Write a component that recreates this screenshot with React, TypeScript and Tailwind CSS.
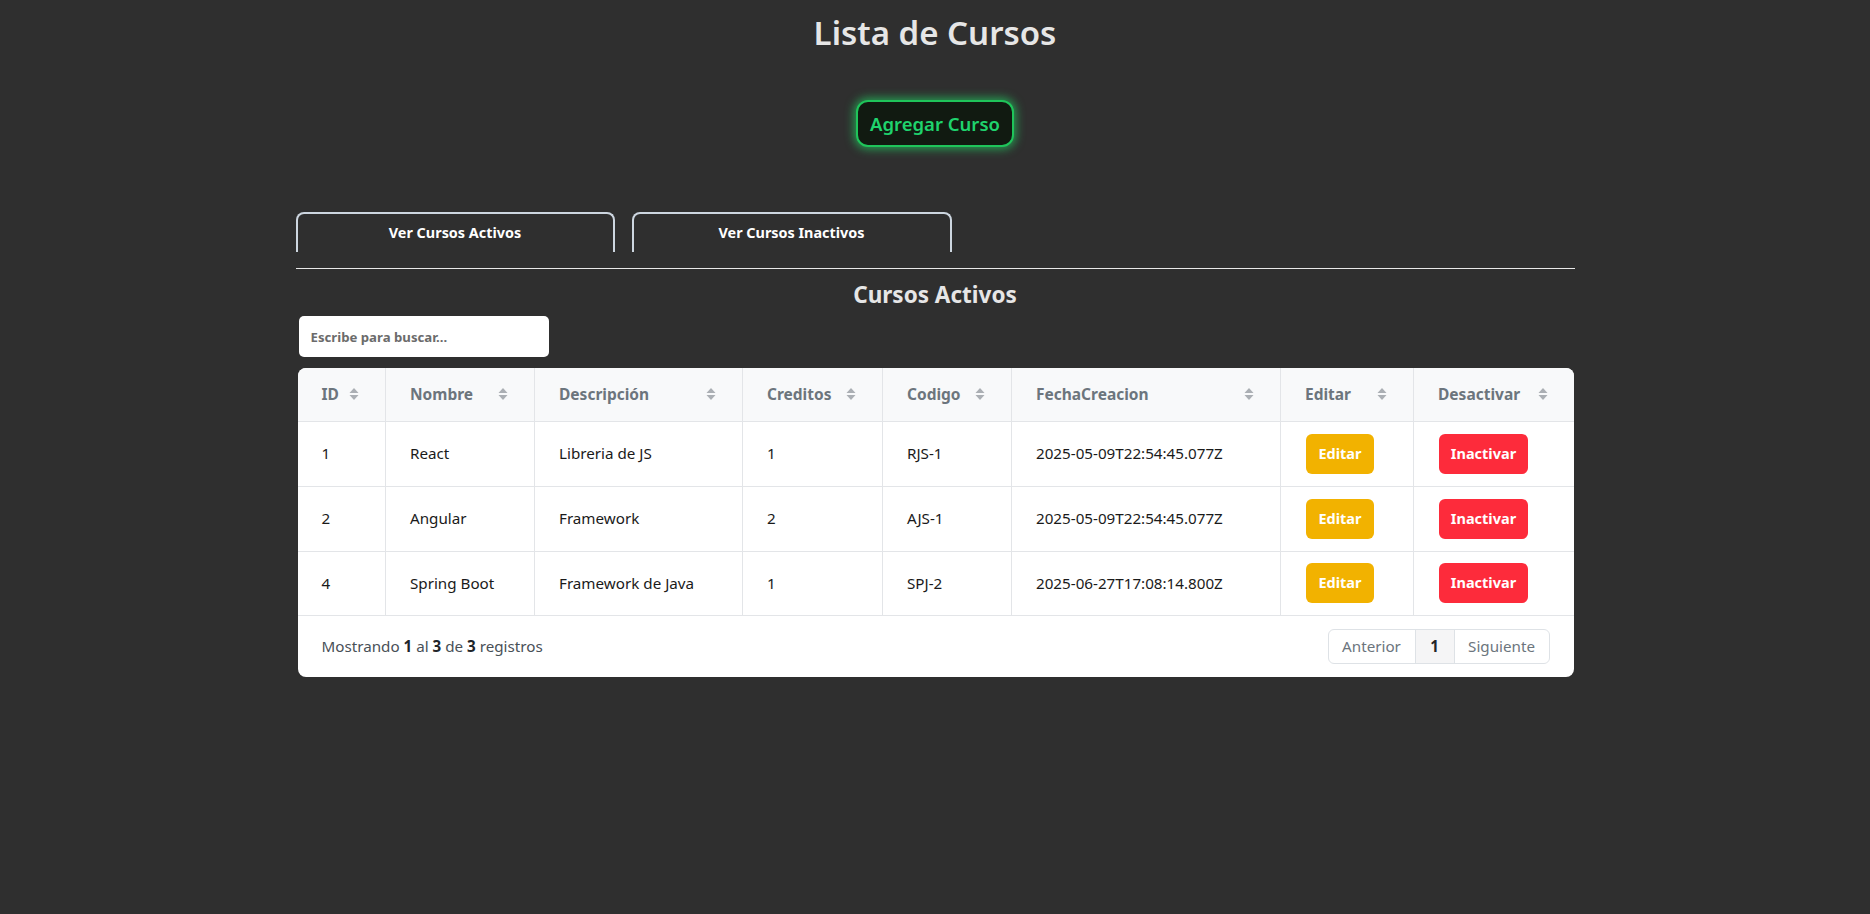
import React from "react";

const rows = [
  { id: "1", nombre: "React", desc: "Libreria de JS", cred: "1", cod: "RJS-1", fecha: "2025-05-09T22:54:45.077Z" },
  { id: "2", nombre: "Angular", desc: "Framework", cred: "2", cod: "AJS-1", fecha: "2025-05-09T22:54:45.077Z" },
  { id: "4", nombre: "Spring Boot", desc: "Framework de Java", cred: "1", cod: "SPJ-2", fecha: "2025-06-27T17:08:14.800Z" },
];

const headers = ["ID", "Nombre", "Descripción", "Creditos", "Codigo", "FechaCreacion", "Editar", "Desactivar"];
const widths = [88, 149, 208, 140, 129, 269, 133, 160];

function SortIcon() {
  return (
    <svg width="10" height="14" viewBox="0 0 10 14" className="shrink-0">
      <path d="M0.5 6 L5 1 L9.5 6 Z" fill="#abafb4" />
      <path d="M0.5 8 L5 13 L9.5 8 Z" fill="#abafb4" />
    </svg>
  );
}

export default function App() {
  return (
    <div className="min-h-[914px] bg-[#2f2f2f] font-['Noto_Sans',sans-serif]">
      <h1 className="pt-[12px] text-center text-[33px] leading-[42px] font-semibold text-[#e6e6e6]">
        Lista de Cursos
      </h1>
      <div className="mt-[46px] flex justify-center">
        <button className="h-[47px] w-[158px] rounded-[12px] border-2 border-[#1fc45a] bg-[#111a11] text-[18.5px] font-semibold text-[#1fd36d] shadow-[0_0_10px_2px_rgba(34,197,94,0.75)]">
          Agregar Curso
        </button>
      </div>

      <div className="mx-auto mt-[65px] w-[1279px]">
        <div className="flex gap-[17px]">
          <div className="flex h-[40px] w-[319px] items-center justify-center rounded-t-[8px] border-2 border-b-0 border-[#cdd6e0] text-[14.4px] font-bold text-white">
            Ver Cursos Activos
          </div>
          <div className="flex h-[40px] w-[320px] items-center justify-center rounded-t-[8px] border-2 border-b-0 border-[#cdd6e0] text-[14.4px] font-bold text-white">
            Ver Cursos Inactivos
          </div>
        </div>
        <div className="mt-[16px] h-px bg-[#e8e8e8]" />
        <h2 className="mt-[11px] text-center text-[22.5px] leading-[30px] font-bold text-[#e6e6e6]">Cursos Activos</h2>
        <div className="mt-[6px] ml-[3px]">
          <input
            className="h-[41px] w-[250px] rounded-[5px] bg-white pl-[12px] text-[13.2px] font-bold text-[#333] outline-none placeholder:text-[#6b6b6b]"
            placeholder="Escribe para buscar..."
          />
        </div>

        <div className="mt-[11px] ml-[2px] w-[1276px] overflow-hidden rounded-[8px] bg-white">
          <table className="w-full table-fixed border-collapse">
            <colgroup>
              {widths.map((w, i) => (
                <col key={i} style={{ width: w }} />
              ))}
            </colgroup>
            <thead>
              <tr className="h-[53px] bg-[#f8f9fa]">
                {headers.map((h, i) => (
                  <th
                    key={h}
                    className={`border-b border-[#e3e5e8] pl-[24px] pr-[26px] text-left text-[15.5px] font-bold text-[#6c757d] ${i < headers.length - 1 ? "border-r" : ""}`}
                  >
                    <div className="flex items-center justify-between">
                      <span>{h}</span>
                      <SortIcon />
                    </div>
                  </th>
                ))}
              </tr>
            </thead>
            <tbody>
              {rows.map((r, ri) => {
                const cells = [r.id, r.nombre, r.desc, r.cred, r.cod, r.fecha];
                return (
                  <tr key={ri} className={ri === 2 ? "h-[64px]" : "h-[65px]"}>
                    {cells.map((c, ci) => (
                      <td key={ci} className="border-r border-b border-[#e3e5e8] pl-[24px] text-[15.2px] text-[#1a1a1a]">
                        {c}
                      </td>
                    ))}
                    <td className="border-r border-b border-[#e3e5e8] pl-[25px]">
                      <button className="h-[40px] w-[68px] rounded-[6px] bg-[#f2b200] text-[14.5px] font-bold text-white">
                        Editar
                      </button>
                    </td>
                    <td className="border-b border-[#e3e5e8] pl-[25px]">
                      <button className="h-[40px] w-[89px] rounded-[6px] bg-[#fd2b3b] text-[14.5px] font-bold text-white">
                        Inactivar
                      </button>
                    </td>
                  </tr>
                );
              })}
            </tbody>
          </table>
          <div className="flex h-[61px] items-center justify-between pr-[24px] pl-[24px]">
            <div className="text-[15.2px] text-[#495057]">
              Mostrando <b className="text-[#212529]">1</b> al <b className="text-[#212529]">3</b> de{" "}
              <b className="text-[#212529]">3</b> registros
            </div>
            <div className="flex h-[35px] overflow-hidden rounded-[6px] border border-[#dee2e6] text-[15.2px]">
              <div className="flex w-[86px] items-center justify-center text-[#6c757d]">Anterior</div>
              <div className="flex w-[40px] items-center justify-center border-x border-[#dee2e6] bg-[#f5f5f6] font-bold text-[#212529]">
                1
              </div>
              <div className="flex w-[94px] items-center justify-center text-[#6c757d]">Siguiente</div>
            </div>
          </div>
        </div>
      </div>
    </div>
  );
}
